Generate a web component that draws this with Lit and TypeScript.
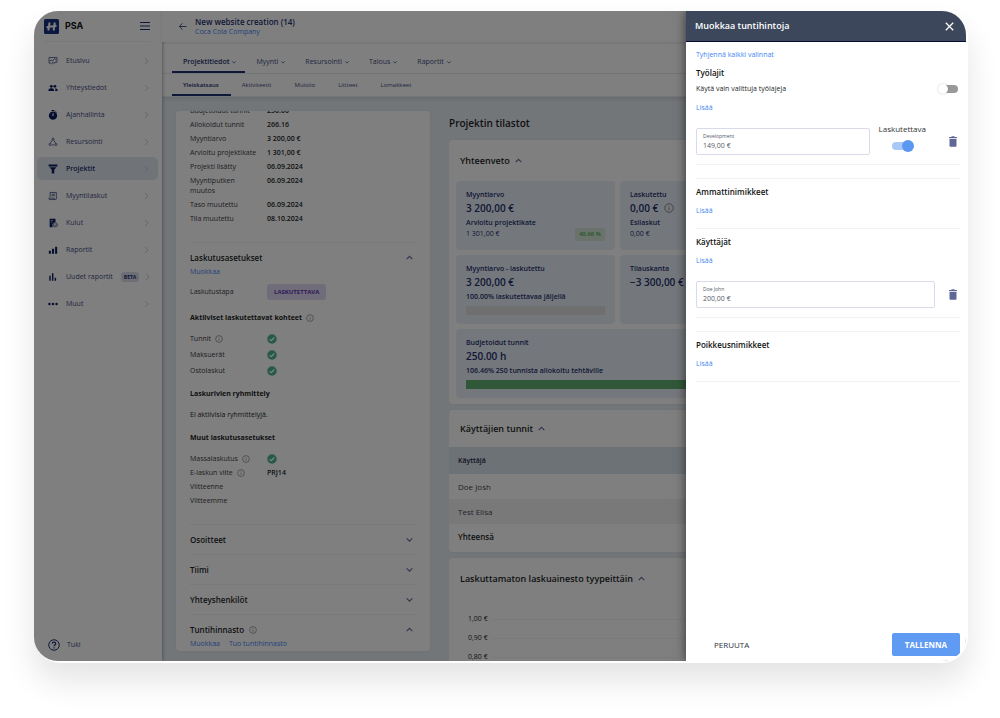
import { LitElement, html, css, svg, nothing, type TemplateResult } from "lit";
import { customElement, state } from "lit/decorators.js";
import { classMap } from "lit/directives/class-map.js";
import { styleMap } from "lit/directives/style-map.js";

type Glyph = TemplateResult;

const chevron = (dir: "up" | "down" | "right") => {
  const d = { up: "M1.5 5.5 4 3 6.5 5.5", down: "M1.5 3 4 5.5 6.5 3", right: "M3 1 6 4 3 7" }[dir];
  return html`<svg class="chevron" viewBox="0 0 8 8" aria-hidden="true"><path d=${d} /></svg>`;
};

const info = html`<svg class="info" viewBox="0 0 16 16" aria-hidden="true">
  <circle cx="8" cy="8" r="6.8" /><path d="M8 7.2v4.2M8 4.4v1.4" />
</svg>`;

const check = html`<svg class="check" viewBox="0 0 20 20" role="img" aria-label="Kyllä">
  <circle cx="10" cy="10" r="9.5" /><path d="m5.3 10.2 3.2 3.2 6.2-6.4" />
</svg>`;

const trash = html`<svg class="trash" viewBox="0 0 8 11" aria-hidden="true">
  <path d="M0 1h2.2L2.8.3h2.4L5.8 1H8v1H0zM.5 2.8h7V10q0 .8-.8.8H1.3Q.5 10.8.5 10z" />
</svg>`;

const icons: Record<string, Glyph> = {
  board: svg`<path class="line" d="M7 17H2.5V3.500h19V15H17M4 12.500l4-3 3 3 4.500-6 4 2M8 20l3.500-5 3 3 3-4" />`,
  people: svg`<circle cx="8" cy="8" r="3.400" /><circle cx="16.500" cy="8" r="3.400" /><path d="M1 19v-2.500c0-2.500 4-4 7-4s6.500 1.500 6.500 4V19zM16 19h7v-2.500c0-2.500-3.500-4-6.500-4 1.500 1 1.500 2 1.500 4z" />`,
  timer: svg`<path d="M8.500 0h7v2.500h-7z" /><path d="m18.500 3 2.500 2.500-1.500 1.500L17 4.500z" /><circle cx="12" cy="13.500" r="10" /><path class="cut" d="M12 7.500v7" />`,
  nodes: svg`<circle class="line" cx="12" cy="5" r="2.500" /><path class="line" d="M10.500 7.500 5.500 15M13.500 7.500l5 7.500M9 19h6" /><circle class="line" cx="5" cy="18" r="2.500" /><circle class="line" cx="19" cy="18" r="2.500" />`,
  funnel: svg`<path d="M1.500 1h21v5h-21zM3.500 7.500h17L15 14v8.500H9V14z" />`,
  invoice: svg`<path class="line" d="M5 15V3.500h15V19M2 17h13v3.500H4Q2 20.500 2 17zM15 20.500h3q2 0 2-2M8.500 7.500h8M8.500 11h8" />`,
  expense: svg`<path d="M4 2h14v8q-8 1-7.500 8 0 2 1 4H4z" /><path class="cut thin" d="M7 6h5M7 9.500h3" /><circle class="line" cx="17.500" cy="16.500" r="5" /><path class="line" d="m15 16.500 2 2 3.500-4" />`,
  bars: svg`<path d="M2 14h5v7H2zM9.500 9h5v12h-5zM17 4h5v17h-5z" />`,
  columns: svg`<path d="M3 9h3.500v12H3zM9.500 3H13v18H9.500zM16 14h3.500v7H16z" />`,
  dots: svg`<circle cx="3.500" cy="12" r="3" /><circle cx="12" cy="12" r="3" /><circle cx="20.500" cy="12" r="3" />`,
};

const navItems = [
  { icon: "board", label: "Etusivu" },
  { icon: "people", label: "Yhteystiedot" },
  { icon: "timer", label: "Ajanhallinta" },
  { icon: "nodes", label: "Resursointi" },
  { icon: "funnel", label: "Projektit", active: true },
  { icon: "invoice", label: "Myyntilaskut" },
  { icon: "expense", label: "Kulut" },
  { icon: "bars", label: "Raportit" },
  { icon: "columns", label: "Uudet raportit", beta: true },
  { icon: "dots", label: "Muut" },
];

const mainTabs = ["Projektitiedot", "Myynti", "Resursointi", "Talous", "Raportit"];
const subTabs = ["Yleiskatsaus", "Aktiviteetit", "Muistio", "Liitteet", "Lomakkeet"];

const facts = [
  ["Budjetoidut tunnit", "250.00"],
  ["Allokoidut tunnit", "266.16"],
  ["Myyntiarvo", "3 200,00 €"],
  ["Arvioitu projektikate", "1 301,00 €"],
  ["Projekti lisätty", "06.09.2024"],
  ["Myyntiputken muutos", "06.09.2024"],
  ["Taso muutettu", "06.09.2024"],
  ["Tila muutettu", "08.10.2024"],
];

@customElement("app-root")
export class AppRoot extends LitElement {
  @state() private onlySelected = false;
  @state() private billable = true;

  static styles = css`
    :host {
      display: block;
      font-family: "Open Sans", "Noto Sans", sans-serif;
      font-size: 7px;
      line-height: 10px;
      color: #1d1f27;
      background: #fff;
      --navy: #1c3070;
      --link: #4285f4;
      --ground: #e7ecf2;
      --tile: #e9eef6;
      --rule: #f2f3f5;
      --drawer: 280px;
    }
    * { box-sizing: border-box; }
    h1, h2, h3, h4, p, dl, dd, ul { margin: 0; padding: 0; }
    ul { list-style: none; }
    button, input { font: inherit; color: inherit; border: 0; background: none; padding: 0; margin: 0; }
    button { cursor: pointer; }
    a { color: var(--link); text-decoration: none; font-weight: 500; }
    svg { flex: none; display: block; }

    .page { height: 100vh; padding: 11px 32px 55px 34px; overflow: hidden; }
    .frame {
      height: 100%;
      padding: 0 2px 2px 0;
      border-radius: 26px;
      background: #fff;
      box-shadow: 0 18px 32px rgba(0, 0, 0, 0.11);
    }
    .shell {
      position: relative;
      height: 100%;
      display: flex;
      overflow: hidden;
      border-radius: 24px;
      background: var(--ground);
    }

    .chevron { width: 8px; height: 8px; fill: none; stroke: #626c98; stroke-width: 1; }
    .info { width: 8px; height: 8px; fill: none; stroke: #777; stroke-width: 1.3; }
    .check { width: 10px; height: 10px; }
    .check circle { fill: #4db491; }
    .check path { fill: none; stroke: #fff; stroke-width: 2.4; }

    /* Side navigation */
    .side {
      flex: none;
      width: 128px;
      display: flex;
      flex-direction: column;
      background: #fff;
      box-shadow: 1px 0 3px rgba(0, 0, 0, 0.3);
      z-index: 1;
    }
    .brand {
      display: flex;
      align-items: center;
      gap: 6px;
      height: 31px;
      margin: 0 11px 7px 10px;
      border-bottom: 1px solid var(--rule);
      font: 700 9px/14px Inter, "Liberation Sans", sans-serif;
      color: #111;
    }
    .brand svg { width: 15px; height: 15px; }
    .brand .menu { margin-left: auto; }
    .brand .menu svg { width: 12px; height: 10px; stroke: var(--navy); stroke-width: 1.2; }
    .nav { display: flex; flex-direction: column; gap: 4px; padding: 0 4px 0 3px; }
    .nav-link {
      display: flex;
      align-items: center;
      gap: 8px;
      height: 23px;
      padding: 0 8px 0 11px;
      border-radius: 5px;
      color: #3e4c83;
      font-weight: 500;
      white-space: nowrap;
    }
    .nav-link.active { background: #e1e7ef; color: var(--navy); font-weight: 600; }
    .nav-link > svg:first-child { width: 10px; height: 10px; fill: #0f1f60; }
    .nav-link .line { fill: none; stroke: #33427d; stroke-width: 1.8; }
    .nav-link .cut { fill: none; stroke: #fff; stroke-width: 2.6; }
    .nav-link .thin { stroke-width: 1.4; }
    .nav-link .chevron { margin-left: auto; stroke: #c3c8d8; stroke-width: 0.9; }
    .beta { padding: 0 3px; border-radius: 3px; background: #d9deea; color: var(--navy); font-size: 5px; font-weight: 700; }
    .nav-link .beta + .chevron { margin-left: -4px; }
    .help { margin: auto 4px 5px 3px; gap: 7px; }
    .help.nav-link > svg:first-child { fill: none; stroke: var(--navy); stroke-width: 2; width: 12px; height: 12px; }
    .help.nav-link > svg:first-child .q { stroke-width: 2.4; }

    /* Project header and tabs */
    .main { flex: 1; min-width: 0; display: flex; flex-direction: column; }
    .head {
      flex: none;
      display: flex;
      align-items: center;
      gap: 8px;
      height: 31px;
      padding: 0 16px;
      background: #fff;
      box-shadow: 0 1px 3px rgba(0, 0, 0, 0.12);
      z-index: 1;
    }
    .head .back svg { width: 9px; height: 9px; fill: none; stroke: #4b5685; stroke-width: 1; }
    .head h1 { font-size: 8px; line-height: 10px; font-weight: 600; color: var(--navy); }
    .head a { display: block; line-height: 9px; }
    .tabs { flex: none; display: flex; padding: 0 10px; background: #fff; border-bottom: 1px solid #e9ebf0; }
    .tabs a {
      display: flex;
      align-items: center;
      gap: 2px;
      padding: 0 8px 0 11px;
      border-bottom: 2px solid transparent;
      color: #3e4c83;
      font-weight: 500;
    }
    .tabs .chevron { width: 6px; height: 6px; stroke-width: 1.2; }
    .tabs a.active { color: var(--navy); font-weight: 600; border-color: var(--navy); }
    .tabs.primary { padding-top: 10px; }
    .tabs.primary a { height: 21px; }
    .tabs.secondary { padding-top: 2px; box-shadow: 0 2px 4px rgba(0, 0, 0, 0.1); }
    .tabs.secondary a { height: 20px; padding: 0 12px 0 11px; font-size: 6px; }

    .content { flex: 1; min-height: 0; display: grid; grid-template-columns: 254px 1fr; gap: 19px; padding: 14px 16px 0 14px; }
    .card { background: #fff; border-radius: 4px; box-shadow: 0 0 3px rgba(30, 50, 90, 0.06); }

    /* Project details */
    .details { margin-bottom: 10px; padding: 0 13px 0 14px; overflow: hidden; }
    .facts { display: grid; grid-template-columns: 77px 1fr; row-gap: 4px; }
    .facts dt { max-width: 68px; display: flex; align-items: center; gap: 4px; color: #3a3c44; white-space: nowrap; }
    .facts dd { display: flex; align-items: center; font-weight: 600; }
    .scrolled { margin-top: -5px; padding-bottom: 18px; }
    .scrolled dt { white-space: normal; }
    .scrolled dd { align-items: flex-start; }
    .checks { row-gap: 6px; }
    .section { border-top: 1px solid var(--rule); }
    .section-head {
      display: flex;
      align-items: center;
      gap: 5px;
      width: 100%;
      height: 29px;
      padding-right: 3px;
      text-align: left;
      font-size: 8px;
      font-weight: 600;
    }
    .section-head > .chevron { margin-left: auto; width: 9px; height: 9px; }
    .section h4 { display: flex; align-items: center; gap: 4px; font-size: 7px; font-weight: 700; }
    .links { display: flex; gap: 9px; margin-top: -5px; padding-bottom: 1px; }
    .mode { align-items: center; margin: 6px 0 13px; }
    .tag { padding: 3px 7px; border-radius: 3px; background: #e2d8f5; color: #5b35b0; font-size: 6px; font-weight: 700; }
    .group { display: grid; row-gap: 11px; }
    .group + .group { margin-top: 13px; }
    .last { padding-bottom: 18px; }

    /* Statistics */
    .stats { min-width: 0; display: flex; flex-direction: column; gap: 6px; overflow: hidden; }
    .stats h2 { font-size: 10px; line-height: 14px; font-weight: 600; padding: 5px 0 4px; }
    .stats .card { flex: none; overflow: hidden; }
    .card-head { display: flex; align-items: center; gap: 4px; height: 41px; padding: 0 11px; font-size: 9px; font-weight: 600; width: 100%; }
    .card-head.compact { height: 37px; }
    .card-head .chevron { width: 9px; height: 9px; }
    .tiles { display: grid; grid-template-columns: repeat(3, 1fr); gap: 5px; padding: 0 7px 6px; }
    .tile { height: 69px; padding: 9px 10px 0; border-radius: 4px; background: var(--tile); color: var(--navy); font-weight: 600; }
    .tile.wide { grid-column: 1 / -1; }
    .tile .value { display: flex; align-items: center; gap: 6px; font-size: 10px; line-height: 16px; padding-bottom: 2px; }
    .tile .value .info { width: 10px; height: 10px; }
    .tile .foot { display: flex; justify-content: space-between; align-items: flex-start; line-height: 12px; font-weight: 500; }
    .pct { padding: 1px 4px; border-radius: 2px; background: #d2e6d6; color: #4caf50; font-size: 6px; line-height: 11px; font-weight: 600; }
    .bar { height: 9px; margin-top: 4px; background: #dedede; }
    .bar span { display: block; height: 100%; background: #60b070; }
    table { width: 100%; border-collapse: collapse; text-align: left; font-size: 8px; }
    th, td { padding: 0 9px; height: 25px; font-weight: 400; color: #44464e; }
    thead th { height: 27px; font-size: 7px; font-weight: 600; background: #dbe4ee; color: #1d2540; }
    tbody tr:nth-child(2) { background: #f3f3f5; }
    tfoot th { height: 28px; padding-bottom: 3px; font-weight: 600; color: #1d1f27; }
    .axis { display: grid; row-gap: 9px; padding: 15px 11px 30px 19px; }
    .axis li { display: grid; grid-template-columns: auto 1fr; gap: 4px; align-items: center; }
    .axis li::after { content: ""; border-top: 1px solid #f4f4f4; }

    .scrim { position: absolute; inset: 0 var(--drawer) 0 0; background: rgba(0, 0, 0, 0.5); z-index: 2; }

    /* Drawer */
    .drawer {
      position: absolute;
      inset: 0 0 0 auto;
      width: var(--drawer);
      display: flex;
      flex-direction: column;
      background: #fff;
      box-shadow: 0 0 10px rgba(0, 0, 0, 0.6);
      z-index: 3;
    }
    .drawer header {
      flex: none;
      display: flex;
      align-items: center;
      justify-content: space-between;
      height: 31px;
      padding: 0 12px 0 9px;
      border-bottom: 1px solid #050d33;
      background: #3c475b;
      color: #fff;
    }
    .drawer h2 { font-size: 9px; line-height: 12px; font-weight: 600; }
    .drawer header svg { width: 9px; height: 9px; stroke: #fff; stroke-width: 1.3; }
    .body { flex: 1; padding: 8px 6px 0 10px; }
    .body > a { display: block; }
    .body h3 { font-size: 8px; line-height: 12px; font-weight: 600; color: #111; }
    .body section { padding-top: 7px; }
    .body section + section { border-top: 1px solid var(--rule); }
    .body section > a { display: block; margin-top: 8px; }
    .body section.plain { padding-bottom: 12px; }
    .body section.end { border-bottom: 1px solid var(--rule); }
    .body section.rows { padding-bottom: 13px; }
    .option { display: flex; justify-content: space-between; align-items: center; height: 12px; padding-right: 2px; margin-top: 4px; }
    .row { display: flex; align-items: center; padding: 15px 3px 9px 0; border-bottom: 1px solid var(--rule); }
    .field { flex: 1; height: 27px; padding: 3px 6px 0; border: 1px solid #d9dbea; border-radius: 2px; color: #555a68; }
    .field label { display: block; font-size: 5px; line-height: 8px; }
    .field input { display: block; width: 100%; height: 11px; outline: 0; }
    .bill { align-self: flex-start; display: grid; justify-items: center; gap: 8px; margin: -4px 0 0 9px; font-size: 8px; line-height: 10px; color: #333; }
    .row button { margin-left: 23px; }
    .row .field + button { margin-left: 14px; }
    .trash { width: 8px; height: 11px; fill: #5f6796; }
    .switch {
      appearance: none;
      position: relative;
      display: block;
      width: 20px;
      height: 8px;
      margin: 0;
      border-radius: 4px;
      cursor: pointer;
      background: linear-gradient(#999, #999) right / 15px 8px no-repeat;
    }
    .switch::before {
      content: "";
      position: absolute;
      left: 0;
      top: -1px;
      width: 10px;
      height: 10px;
      border-radius: 50%;
      background: #fff;
      box-shadow: 0 0 2px rgba(0, 0, 0, 0.25);
    }
    .switch:checked { background: #a9c8f7; }
    .switch:checked::before { left: 10px; top: -2px; width: 12px; height: 12px; background: #5a98f2; box-shadow: none; }
    .drawer footer { flex: none; display: flex; justify-content: space-between; align-items: center; padding: 0 6px 5px 18px; font-size: 8px; }
    .cancel { height: 23px; padding: 0 10px; color: #2d3142; font-weight: 500; }
    .save { height: 23px; padding: 0 13px; border-radius: 2px; background: #5f9bf3; color: #fff; font-weight: 700; }
  `;

  private renderSide() {
    return html`<aside class="side">
      <div class="brand">
        <svg viewBox="0 0 15 15" aria-hidden="true">
          <rect width="15" height="15" rx="1.5" fill="#173080" />
          <path d="M5.600 3.500 4.400 11.500M10.800 3.500 9.600 11.500M2.500 8.200l10-1.400" fill="none" stroke="#fff" stroke-width="2" />
        </svg>
        PSA
        <button class="menu" aria-label="Valikko"><svg viewBox="0 0 12 10"><path d="M1 1.500h10M1 5h10M1 8.500h10" /></svg></button>
      </div>
      <nav class="nav">
        ${navItems.map(
          (n) => html`<a href="#" class=${classMap({ "nav-link": true, active: !!n.active })}>
            <svg viewBox="0 0 24 24" aria-hidden="true">${icons[n.icon]}</svg>
            <span>${n.label}</span>${n.beta ? html`<span class="beta">BETA</span>` : nothing}${chevron("right")}
          </a>`
        )}
      </nav>
      <a href="#" class="nav-link help">
        <svg viewBox="0 0 24 24" aria-hidden="true"><circle cx="12" cy="12" r="10.500" /><path class="q" d="M8.500 9.500c0-4.500 7-4.500 7 0 0 2.500-3.500 2.500-3.500 5M12 16.500v2.300" /></svg>
        <span>Tuki</span>
      </a>
    </aside>`;
  }

  private section(title: string, open: boolean, body: unknown = nothing, withInfo = false) {
    return html`<section class="section">
      <button class="section-head" aria-expanded=${open}>${title}${withInfo ? info : nothing}${chevron(open ? "up" : "down")}</button>
      ${body}
    </section>`;
  }

  private renderDetails() {
    return html`<div class="card details">
      <dl class="facts scrolled">${facts.map(([k, v]) => html`<dt>${k}</dt><dd>${v}</dd>`)}</dl>
      ${this.section(
        "Laskutusasetukset",
        true,
        html`<div class="links"><a href="#">Muokkaa</a></div>
          <dl class="facts mode"><dt>Laskutustapa</dt><dd><span class="tag">LASKUTETTAVA</span></dd></dl>
          <div class="group">
            <h4>Aktiiviset laskutettavat kohteet ${info}</h4>
            <dl class="facts checks">
              <dt>Tunnit ${info}</dt><dd>${check}</dd>
              <dt>Maksuerät</dt><dd>${check}</dd>
              <dt>Ostolaskut</dt><dd>${check}</dd>
            </dl>
          </div>
          <div class="group">
            <h4>Laskurivien ryhmittely</h4>
            <p>Ei aktiivisia ryhmittelyjä.</p>
          </div>
          <div class="group last">
            <h4>Muut laskutusasetukset</h4>
            <dl class="facts">
              <dt>Massalaskutus ${info}</dt><dd>${check}</dd>
              <dt>E-laskun viite ${info}</dt><dd>PRJ14</dd>
              <dt>Viitteenne</dt><dd></dd>
              <dt>Viitteemme</dt><dd></dd>
            </dl>
          </div>`
      )}
      ${["Osoitteet", "Tiimi", "Yhteyshenkilöt"].map((t) => this.section(t, false))}
      ${this.section("Tuntihinnasto", true, html`<div class="links"><a href="#">Muokkaa</a><a href="#">Tuo tuntihinnasto</a></div>`, true)}
    </div>`;
  }

  private bar(percent: number) {
    return html`<div class="bar"><span style=${styleMap({ width: `${percent}%` })}></span></div>`;
  }

  private renderStats() {
    return html`<div class="stats">
      <h2>Projektin tilastot</h2>
      <section class="card">
        <button class="card-head">Yhteenveto ${chevron("up")}</button>
        <div class="tiles">
          <div class="tile">
            <p>Myyntiarvo</p>
            <p class="value">3 200,00 €</p>
            <p>Arvioitu projektikate</p>
            <div class="foot"><span>1 301,00 €</span><span class="pct">40.66 %</span></div>
          </div>
          <div class="tile">
            <p>Laskutettu</p>
            <p class="value">0,00 € ${info}</p>
            <p>Esilaskut</p>
            <div class="foot"><span>0,00 €</span></div>
          </div>
          <div class="tile"></div>
          <div class="tile">
            <p>Myyntiarvo - laskutettu</p>
            <p class="value">3 200,00 €</p>
            <p>100.00% laskutettavaa jäljellä</p>
            ${this.bar(0)}
          </div>
          <div class="tile">
            <p>Tilauskanta</p>
            <p class="value">−3 300,00 €</p>
          </div>
          <div class="tile"></div>
          <div class="tile wide">
            <p>Budjetoidut tunnit</p>
            <p class="value">250.00 h</p>
            <p>106.46% 250 tunnista allokoitu tehtäville</p>
            ${this.bar(100)}
          </div>
        </div>
      </section>
      <section class="card">
        <button class="card-head compact">Käyttäjien tunnit ${chevron("up")}</button>
        <table>
          <thead><tr><th>Käyttäjä</th></tr></thead>
          <tbody>
            <tr><td>Doe Josh</td></tr>
            <tr><td>Test Elisa</td></tr>
          </tbody>
          <tfoot><tr><th>Yhteensä</th></tr></tfoot>
        </table>
      </section>
      <section class="card">
        <button class="card-head">Laskuttamaton laskuainesto tyypeittäin ${chevron("up")}</button>
        <ul class="axis">${["1,00 €", "0,90 €", "0,80 €"].map((v) => html`<li>${v}</li>`)}</ul>
      </section>
    </div>`;
  }

  private field(id: string, label: string, value: string) {
    return html`<div class="field"><label for=${id}>${label}</label><input id=${id} .value=${value} /></div>`;
  }

  private renderDrawer() {
    const remove = html`<button aria-label="Poista">${trash}</button>`;
    return html`<aside class="drawer" role="dialog" aria-labelledby="drawer-title">
      <header>
        <h2 id="drawer-title">Muokkaa tuntihintoja</h2>
        <button aria-label="Sulje"><svg viewBox="0 0 9 9"><path d="m.8.8 7.400 7.400M8.200.8.8 8.200" /></svg></button>
      </header>
      <div class="body">
        <a href="#">Tyhjennä kaikki valinnat</a>
        <section class="rows">
          <h3>Työlajit</h3>
          <div class="option">
            <label for="only">Käytä vain valittuja työlajeja</label>
            <input id="only" class="switch" type="checkbox" .checked=${this.onlySelected}
              @change=${(e: Event) => (this.onlySelected = (e.target as HTMLInputElement).checked)} />
          </div>
          <a href="#">Lisää</a>
          <div class="row">
            ${this.field("development", "Development", "149,00 €")}
            <div class="bill">
              <label for="billable">Laskutettava</label>
              <input id="billable" class="switch" type="checkbox" .checked=${this.billable}
                @change=${(e: Event) => (this.billable = (e.target as HTMLInputElement).checked)} />
            </div>
            ${remove}
          </div>
        </section>
        <section class="plain"><h3>Ammattinimikkeet</h3><a href="#">Lisää</a></section>
        <section class="rows">
          <h3>Käyttäjät</h3>
          <a href="#">Lisää</a>
          <div class="row">${this.field("john", "Doe John", "200,00 €")}${remove}</div>
        </section>
        <section class="plain end"><h3>Poikkeusnimikkeet</h3><a href="#">Lisää</a></section>
      </div>
      <footer><button class="cancel">PERUUTA</button><button class="save">TALLENNA</button></footer>
    </aside>`;
  }

  render() {
    return html`<div class="page"><div class="frame"><div class="shell">
      ${this.renderSide()}
      <main class="main">
        <header class="head">
          <button class="back" aria-label="Takaisin"><svg viewBox="0 0 9 9"><path d="M8.500 4.500h-7M4.500 1.300 1.300 4.500l3.200 3.200" /></svg></button>
          <div><h1>New website creation (14)</h1><a href="#">Coca Cola Company</a></div>
        </header>
        <nav class="tabs primary">
          ${mainTabs.map((t, i) => html`<a href="#" class=${classMap({ active: i === 0 })}>${t}${chevron("down")}</a>`)}
        </nav>
        <nav class="tabs secondary">
          ${subTabs.map((t, i) => html`<a href="#" class=${classMap({ active: i === 0 })}>${t}</a>`)}
        </nav>
        <div class="content">${this.renderDetails()}${this.renderStats()}</div>
      </main>
      <div class="scrim"></div>
      ${this.renderDrawer()}
    </div></div></div>`;
  }
}
